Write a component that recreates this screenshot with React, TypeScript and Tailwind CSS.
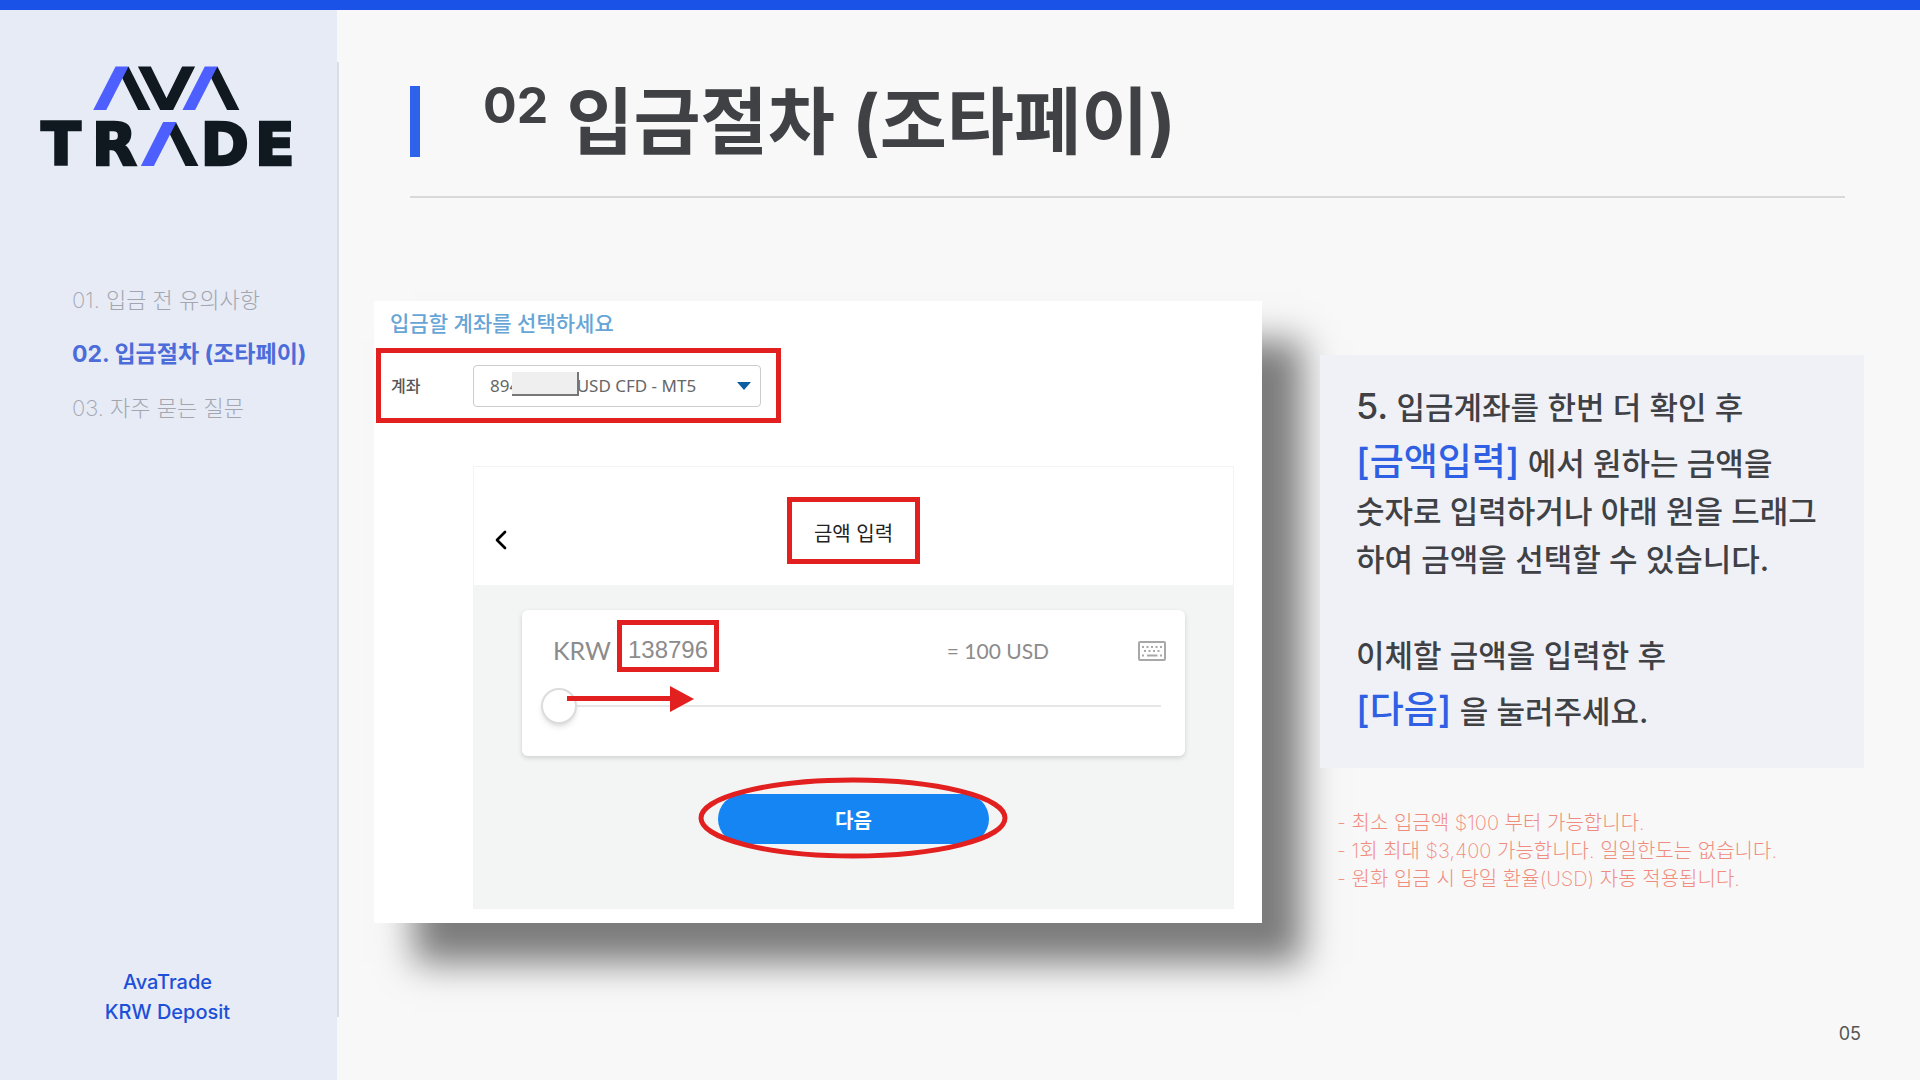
import { ChevronLeft } from "lucide-react";

interface NavItem {
    id: string;
    label: string;
    active: boolean;
}

const navItems: NavItem[] = [
    { id: "notice", label: "01. 입금 전 유의사항", active: false },
    { id: "deposit", label: "02. 입금절차 (조타페이)", active: true },
    { id: "faq", label: "03. 자주 묻는 질문", active: false },
];

const notes: string[] = [
    "- 최소 입금액 $100 부터 가능합니다.",
    "- 1회 최대 $3,400 가능합니다. 일일한도는 없습니다.",
    "- 원화 입금 시 당일 환율(USD) 자동 적용됩니다.",
];

const Logo = () => (
    <svg viewBox="110 198 778 300" className="w-[259px] h-[100px] overflow-visible" role="img" aria-label="AvaTrade">
        {/* Slanted bars */}
        <g fill="#101820">
            <path d="M385 199 L451 330 H414 L360 222Z" />
            <path d="M413 199 H452 L499 295 L546 199 H585 L519 330 H480Z" />
            <path d="M652 199 L718 330 H681 L627 222Z" />
            <path d="M527 366 L595 498 H556 L503 390Z" />
        </g>
        <g fill="#4d5fff">
            <path d="M279 330 L346 199 H385 L318 330Z" />
            <path d="M547 330 L614 199 H652 L585 330Z" />
            <path d="M422 498 L489 366 H529 L461 498Z" />
        </g>
        <g
            fill="#101820"
            stroke="#101820"
            strokeWidth="8"
            fontFamily="DejaVu Sans, sans-serif"
            fontWeight="700"
            fontSize="174"
            textAnchor="middle"
        >
            <text x="182" y="494">T</text>
            <text x="342" y="494">R</text>
            <text x="674" y="494">D</text>
            <text x="824" y="494">E</text>
        </g>
    </svg>
);

const KeyboardIcon = () => (
    <svg viewBox="0 0 28 20" className="w-7 h-5" fill="none" stroke="#a8a8a8">
        <rect x="1" y="1" width="26" height="18" rx="1" strokeWidth="2" />
        <path d="M4 6H24" strokeWidth="2" strokeDasharray="2 2.500" />
        <path d="M6 10H22" strokeWidth="2" strokeDasharray="2 2.500" />
        <path d="M4 14.500H6M9 14.500H19.500M22 14.500H24" strokeWidth="2" />
    </svg>
);

const Sidebar = () => (
    <aside className="w-[337px] shrink-0 bg-[#e6ebf6] flex flex-col">
        <div className="pt-14 pl-[37px]">
            <Logo />
        </div>
        <nav className="mt-[107px] pl-[72px] flex flex-col leading-[54px] whitespace-nowrap">
            {navItems.map((item) => (
                <a
                    key={item.id}
                    href={`#${item.id}`}
                    className={item.active ? "text-[23px] font-bold text-[#4c6cda]" : "text-[22px] font-extralight text-[#a3a6af]"}
                >
                    {item.label}
                </a>
            ))}
        </nav>
        <p className="mt-auto mb-[53px] pr-0.5 text-center text-xl leading-[30px] font-medium text-[#1d50d8]">
            AvaTrade
            <br />
            KRW Deposit
        </p>
    </aside>
);

const AccountRow = () => (
    <div className="mt-[9px] ml-0.5 w-[405px] h-[75px] border-[5px] border-[#e2201f] flex items-center pl-2.5 pr-[15px]">
        <label htmlFor="account" className="w-[82px] text-base font-medium text-[#555]">
            계좌
        </label>
        <div className="relative flex-1">
            <select
                id="account"
                className="w-full h-[42px] appearance-none rounded-sm border border-[#ccc] bg-white pl-4 font-['Noto_Sans',sans-serif] text-[17px] text-[#666]"
            >
                <option>{"894" + "\u00a0".repeat(13) + "USD CFD - MT5"}</option>
            </select>
            {/* Account number mask */}
            <span className="absolute left-[39px] top-[7px] w-[67px] h-6 bg-[#efefef] border-r-2 border-b-2 border-[#777]" />
            <svg viewBox="0 0 14 8" className="absolute right-2.5 top-[17px] w-3.5 h-2 pointer-events-none">
                <path d="M0 0H14L7 8Z" fill="#0d5c9f" />
            </svg>
        </div>
    </div>
);

const AmountCard = () => (
    <div className="relative h-[146px] rounded-md bg-white shadow-[0_2px_5px_rgba(0,0,0,0.15)] pt-2.5 pl-[31px] pr-[19px]">
        <div className="flex items-center">
            <label htmlFor="amount" className="w-16 pt-2.5 font-['Lato',sans-serif] text-[25px] text-[#8c8c8c]">
                KRW
            </label>
            <input
                id="amount"
                defaultValue="138796"
                className="w-[102px] h-[52px] pt-2 border-[5px] border-[#e2201f] bg-white text-center font-['Liberation_Sans',sans-serif] text-2xl text-[#8c8c8c]"
            />
            <span className="ml-auto mr-[89px] pt-2.5 font-['Lato',sans-serif] text-[21px] text-[#8c8c8c]">= 100 USD</span>
            <button type="button" aria-label="키패드" className="pt-2.5">
                <KeyboardIcon />
            </button>
        </div>
        <input
            type="range"
            aria-label="금액"
            defaultValue={0}
            className="absolute left-[19px] top-[78px] w-[620px] h-9 appearance-none bg-transparent [&::-webkit-slider-runnable-track]:h-0.5 [&::-webkit-slider-runnable-track]:bg-[#e6e6e6] [&::-webkit-slider-thumb]:appearance-none [&::-webkit-slider-thumb]:-mt-[17px] [&::-webkit-slider-thumb]:size-9 [&::-webkit-slider-thumb]:rounded-full [&::-webkit-slider-thumb]:border-2 [&::-webkit-slider-thumb]:border-[#dcdcdc] [&::-webkit-slider-thumb]:bg-white [&::-webkit-slider-thumb]:shadow-md"
        />
        <svg viewBox="0 0 128 26" className="absolute left-[45px] top-[76px] w-32 h-[26px] pointer-events-none" fill="#e2201f">
            <path d="M0 10H103V0L127 13L103 26V15H0Z" />
        </svg>
    </div>
);

const DepositScreen = () => (
    <section className="flex-[888] bg-white pt-2 pb-3.5 shadow-[40px_40px_34px_rgba(0,0,0,0.5)]">
        <h2 className="pl-4 text-[21px] leading-[30px] font-medium text-[#66a5d6]">입금할 계좌를 선택하세요</h2>
        <AccountRow />
        <div className="mt-[43px] ml-[99px] mr-7 border border-[#f2f3f3]">
            <div className="h-[118px] pt-[30px]">
                <div className="grid grid-cols-[1fr_auto_1fr] items-end">
                    <button type="button" aria-label="뒤로" className="w-[54px] h-12 flex items-center justify-center text-black">
                        <ChevronLeft className="w-8 h-8" strokeWidth={2} />
                    </button>
                    <h3 className="w-[133px] h-[67px] border-[5px] border-[#e2201f] flex items-center justify-center pt-1.5 text-xl text-[#222]">
                        금액 입력
                    </h3>
                </div>
            </div>
            <div className="bg-[#f3f5f5] pt-[25px] pb-16 px-12">
                <AmountCard />
                <div className="relative mt-[38px] mx-auto w-[271px]">
                    <button type="button" className="w-full h-[50px] pt-1 rounded-full bg-[#1485f2] text-xl font-bold text-white">
                        다음
                    </button>
                    <svg viewBox="0 0 311 82" className="absolute -left-5 -top-[17px] w-[311px] h-[82px] pointer-events-none">
                        <ellipse cx="155" cy="41" rx="152" ry="38" fill="none" stroke="#e2201f" strokeWidth="5" />
                    </svg>
                </div>
            </div>
        </div>
    </section>
);

const Instructions = () => (
    <div className="flex-[544] mt-[54px] flex flex-col whitespace-nowrap">
        <div className="h-[413px] bg-[#eff1f7] pt-[27px] pl-9 text-[31px] leading-[48px] font-medium text-[#404145]">
            <p>
                <span className="text-4xl leading-[48px]">5.</span> 입금계좌를 한번 더 확인 후
            </p>
            <p className="pt-1.5">
                <strong className="text-[37px] leading-[48px] font-medium text-[#2f60e4]">[금액입력]</strong> 에서 원하는 금액을
            </p>
            <p>숫자로 입력하거나 아래 원을 드래그</p>
            <p>하여 금액을 선택할 수 있습니다.</p>
            <p className="pt-12">이체할 금액을 입력한 후</p>
            <p className="pt-1.5">
                <strong className="text-[37px] leading-[48px] font-medium text-[#2f60e4]">[다음]</strong> 을 눌러주세요.
            </p>
        </div>
        <ul className="mt-[41px] pl-[17px] text-xl leading-7 font-extralight text-[#f08c7d]">
            {notes.map((note) => (
                <li key={note}>{note}</li>
            ))}
        </ul>
    </div>
);

const App = () => {
    return (
        <div className="min-h-screen flex flex-col bg-[#f8f8f8] font-['Inter','Noto_Sans_CJK_KR',sans-serif]">
            <div className="h-2.5 bg-[#1a52e8]" />
            <div className="flex-1 flex">
                <Sidebar />
                <div className="w-0.5 shrink-0 mt-[52px] mb-[63px] bg-[#dcdee6]" />
                <main className="flex-1 flex flex-col pt-[76px]">
                    <header className="ml-[71px] mr-[75px] h-28 border-b-2 border-[#d9d9d9]">
                        <div className="h-[71px] border-l-[10px] border-[#2f62ea] pl-[63px] flex items-center text-[#404145]">
                            <h1 className="flex text-[73px] leading-[71px] font-bold whitespace-nowrap">
                                <span className="mr-[18px] text-[50px] leading-[38px]">02</span>
                                입금절차 (조타페이)
                            </h1>
                        </div>
                    </header>
                    <div className="mt-[103px] ml-[35px] mr-14 flex items-start gap-[58px]">
                        <DepositScreen />
                        <Instructions />
                    </div>
                    <p className="mt-auto mb-8 pr-[59px] text-right text-lg text-[#555]">05</p>
                </main>
            </div>
        </div>
    );
};

export default App;
